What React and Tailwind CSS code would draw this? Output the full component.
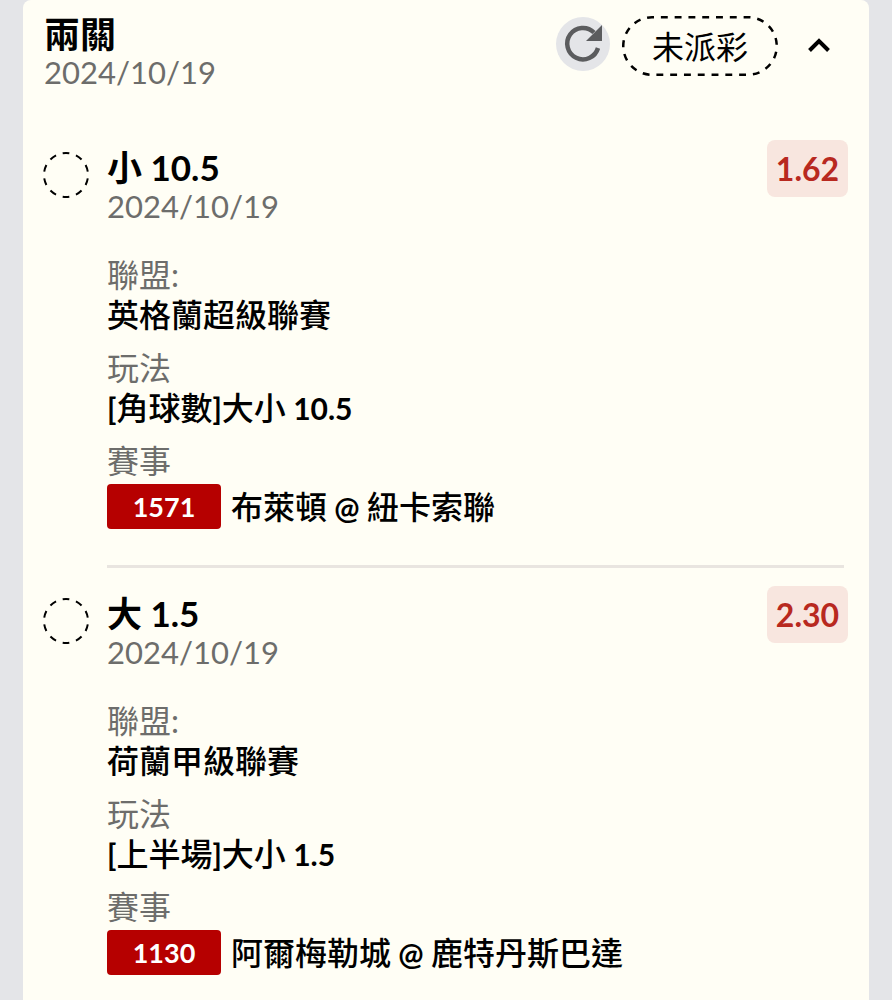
import React, { useState } from "react";

const legs = [
  {
    pick: "小 10.5",
    date: "2024/10/19",
    odds: "1.62",
    league: "英格蘭超級聯賽",
    market: "[角球數]大小 10.5",
    code: "1571",
    match: "布萊頓 @ 紐卡索聯",
  },
  {
    pick: "大 1.5",
    date: "2024/10/19",
    odds: "2.30",
    league: "荷蘭甲級聯賽",
    market: "[上半場]大小 1.5",
    code: "1130",
    match: "阿爾梅勒城 @ 鹿特丹斯巴達",
  },
];

// Latin parts are set slightly smaller and heavier than the Chinese around them
function MixedText({ text }) {
  return text.split(/([\[\]]| [\d.]+| @ )/).map((part, i) =>
    i % 2 ? (
      <span key={i} className="text-[30px] font-bold whitespace-pre">
        {part}
      </span>
    ) : (
      part
    )
  );
}

function RefreshIcon() {
  return (
    <svg viewBox="0 0 54 54" className="size-[54px]" fill="none" aria-hidden="true">
      <path d="M42 31A15.700 15.700 0 1 1 38 15.500" stroke="#5b5c5e" strokeWidth="4.500" />
      <path d="M46 8V24H30Z" fill="#5b5c5e" />
    </svg>
  );
}

function PendingRing() {
  return (
    <svg viewBox="0 0 46 46" className="size-[46px] shrink-0" fill="none" aria-hidden="true">
      <circle
        cx="23"
        cy="23"
        r="22"
        stroke="#000"
        strokeWidth="2"
        pathLength="110"
        strokeDasharray="5.5 5.5"
        strokeDashoffset="2.75"
        transform="rotate(-90 23 23)"
      />
    </svg>
  );
}

function Leg({ leg, last }) {
  return (
    <li className="flex gap-[18px]">
      <div className="pt-3">
        <PendingRing />
      </div>
      <div className="min-w-0 flex-1">
        <div className="flex items-start justify-between">
          <div className="pt-[7px]">
            <h3 className="text-[35px] leading-10 font-bold">{leg.pick}</h3>
            <p className="text-[31px] leading-[38px] text-[#6d6d6b]">{leg.date}</p>
          </div>
          <span className="flex h-[57px] w-[81px] items-center justify-center rounded-lg bg-[#f8e6df] text-[32px] font-bold text-[#b8291f]">
            {leg.odds}
          </span>
        </div>

        <dl className="mt-[30px] text-[32px] leading-10">
          <dt className="text-[#6d6d6b]">聯盟:</dt>
          <dd className="mb-[13px] font-medium">{leg.league}</dd>
          <dt className="text-[#6d6d6b]">玩法</dt>
          <dd className="mb-[13px] font-medium">
            <MixedText text={leg.market} />
          </dd>
          <dt className="text-[#6d6d6b]">賽事</dt>
          <dd className="flex items-center gap-2.5 pt-[3px] font-medium">
            <span className="flex h-[45px] w-[114px] items-center justify-center rounded bg-[#b60000] text-[27px] font-bold text-white">
              {leg.code}
            </span>
            <span>
              <MixedText text={leg.match} />
            </span>
          </dd>
        </dl>

        {!last && <hr className="mt-9 mr-1 mb-[18px] border-t-3 border-[#e9e5e0]" />}
      </div>
    </li>
  );
}

export default function App() {
  const [open, setOpen] = useState(true);

  return (
    <div className="min-h-screen bg-[#e4e5e8] px-[23px] font-['Lato','Noto_Sans_CJK_TC',sans-serif] text-black">
      <section className="min-h-screen rounded-t-lg bg-[#fffef5] pt-3.5 pr-[21px] pl-5">
        <header className="flex items-start justify-between">
          <div className="pl-px">
            <h2 className="text-4xl leading-10 font-bold">兩關</h2>
            <p className="text-[31px] leading-9 text-[#6d6d6b]">2024/10/19</p>
          </div>
          <div className="flex items-center pt-0.5">
            <button className="mr-3 mb-1 rounded-full bg-[#e4e5e8]" aria-label="重新整理">
              <RefreshIcon />
            </button>
            <span className="relative flex h-[60px] w-[156px] items-center justify-center pt-0.5 text-[32px]">
              <svg viewBox="0 0 156 60" className="absolute inset-0 size-full" fill="none" aria-hidden="true">
                <rect
                  x="1.25"
                  y="1.25"
                  width="153.5"
                  height="57.5"
                  rx="28.75"
                  stroke="#000"
                  strokeWidth="2.5"
                  pathLength="378"
                  strokeDasharray="7 7"
                  strokeDashoffset="5"
                />
              </svg>
              未派彩
            </span>
            <button className="ml-[29px] mr-[17px]" aria-label="收合" onClick={() => setOpen(!open)}>
              <svg
                viewBox="0 0 24 24"
                className={open ? "size-6" : "size-6 rotate-180"}
                fill="none"
                aria-hidden="true"
              >
                <path d="M2.500 16.500 12 7l9.500 9.500" stroke="#000" strokeWidth="4" />
              </svg>
            </button>
          </div>
        </header>

        {open && (
          <ul className="mt-[50px]">
            {legs.map((leg, i) => (
              <Leg key={leg.code} leg={leg} last={i === legs.length - 1} />
            ))}
          </ul>
        )}
      </section>
    </div>
  );
}
